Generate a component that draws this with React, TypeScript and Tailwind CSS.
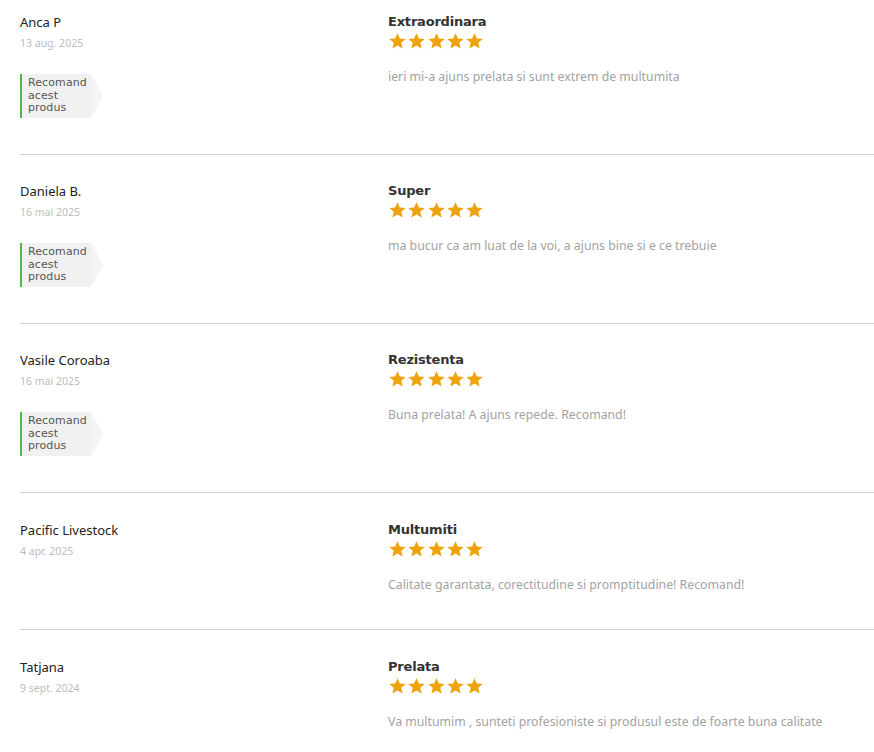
import React from "react";

type Review = {
  name: string;
  date: string;
  title: string;
  text: string;
  recommend: boolean;
};

const reviews: Review[] = [
  {
    name: "Anca P",
    date: "13 aug. 2025",
    title: "Extraordinara",
    text: "ieri mi-a ajuns prelata si sunt extrem de multumita",
    recommend: true,
  },
  {
    name: "Daniela B.",
    date: "16 mai 2025",
    title: "Super",
    text: "ma bucur ca am luat de la voi, a ajuns bine si e ce trebuie",
    recommend: true,
  },
  {
    name: "Vasile Coroaba",
    date: "16 mai 2025",
    title: "Rezistenta",
    text: "Buna prelata! A ajuns repede. Recomand!",
    recommend: true,
  },
  {
    name: "Pacific Livestock",
    date: "4 apr. 2025",
    title: "Multumiti",
    text: "Calitate garantata, corectitudine si promptitudine! Recomand!",
    recommend: false,
  },
  {
    name: "Tatjana",
    date: "9 sept. 2024",
    title: "Prelata",
    text: "Va multumim , sunteti profesioniste si produsul este de foarte buna calitate",
    recommend: false,
  },
];

const Star = () => (
  <svg width="19" height="18" viewBox="0 0 24 24" className="block">
    <path
      d="M12 1.5l3.1 7.2 7.8.6-5.9 5.1 1.8 7.6L12 18l-6.8 4 1.8-7.6-5.9-5.1 7.8-.6z"
      fill="#eea20c"
    />
  </svg>
);

const Badge = () => (
  <div className="flex items-stretch mt-[24px] w-max">
    <div className="bg-[#f1f1f1] border-l-2 border-[#4cb84c] pl-[6px] pr-[10px] py-[3px] w-[71px] text-[11px] leading-[12.5px] text-[#555] font-['DejaVu_Sans',sans-serif] tracking-[0.1px]">
      Recomand
      <br />
      acest
      <br />
      produs
    </div>
    <div className="w-0 h-0 border-y-[22.5px] border-y-transparent border-l-[12px] border-l-[#f4f4f4]" />
  </div>
);

const ReviewRow = ({ r, first, last }: { r: Review; first: boolean; last: boolean }) => (
  <div
    className={`grid grid-cols-[368px_1fr] ${first ? "pt-[13px]" : r.recommend ? "pt-[27px]" : "pt-[28px]"} ${
      last ? "pb-[20px]" : "pb-[36px] border-b border-[#cfcfcf]"
    }`}
  >
    <div className="flex flex-col">
      <div className="text-[13px] leading-[18px] text-[#222]">{r.name}</div>
      <div className="text-[10.5px] leading-[14px] mt-[5px] text-[#bdbdbd]">{r.date}</div>
      {r.recommend && <Badge />}
    </div>
    <div className="flex flex-col">
      <div className="text-[13px] leading-[18px] font-bold text-[#333] font-['DejaVu_Sans',sans-serif] tracking-[-0.2px]">
        {r.title}
      </div>
      <div className="flex gap-[0.3px] mt-[1px]">
        {[0, 1, 2, 3, 4].map((i) => (
          <Star key={i} />
        ))}
      </div>
      <div className="text-[12.3px] leading-[16px] mt-[19px] text-[#a2a2a2]">{r.text}</div>
    </div>
  </div>
);

export default function App() {
  return (
    <div className="bg-white min-h-[752px] pl-[20px] font-['Noto_Sans',sans-serif]">
      {reviews.map((r, i) => (
        <ReviewRow key={r.name} r={r} first={i === 0} last={i === reviews.length - 1} />
      ))}
    </div>
  );
}
